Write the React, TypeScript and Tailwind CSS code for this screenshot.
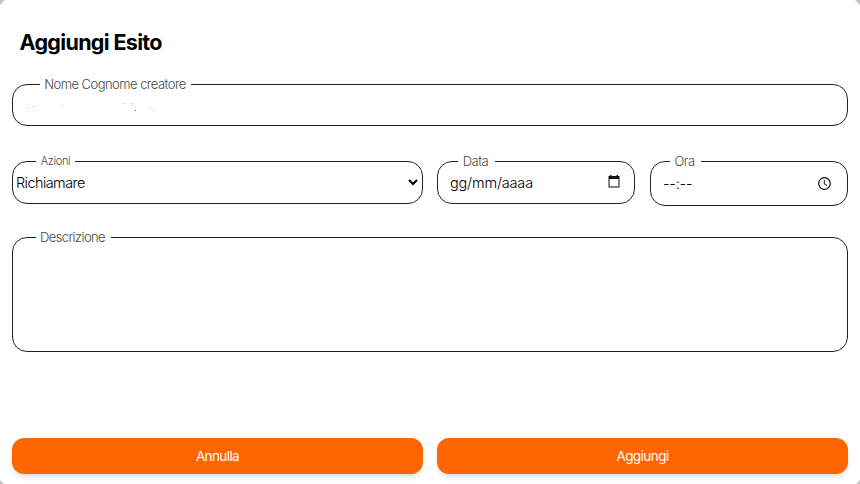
import type { ReactNode } from "react";

function Field({ label, labelClass, className, children }: { label: string; labelClass: string; className: string; children?: ReactNode }) {
  return (
    <div className={`relative flex items-center rounded-[15px] border border-[#212121] ${className}`}>
      <span className={`absolute flex h-4 items-center justify-center whitespace-nowrap bg-white font-light text-[#484848] ${labelClass}`}>{label}</span>
      {children}
    </div>
  );
}

export default function App() {
  return (
    <div className="h-[484px] w-[860px] overflow-hidden bg-[#c4c4c4] font-[Inter,sans-serif]">
      <div className="-mx-[2px] -mt-[2px] flex h-[489px] flex-col rounded-[15px] bg-white px-[14px] pt-[2px]">
        <h1 className="ml-[7.5px] mt-[26px] h-8 text-[21.5px] font-bold leading-8 tracking-[-0.66px] text-black">Aggiungi Esito</h1>
        <Field label="Nome Cognome creatore" labelClass="left-[27px] -top-[8px] w-[151px] pr-px text-[13px] tracking-[-0.54px]" className="mt-[26px] h-[42px]">
          <svg className="ml-3 mt-1" width="132" height="10" fill="#dadada">
            <path d="M0 2h1v1h-1zM1 5h1v1h-1zM3 6h1v1h-1zM8 4h3v1h-3zM36 3h2v1h-2zM97 1h3v1h-3zM106 1h3v1h-3zM123 5h3v1h-3zM128 8h2v1h-2z" />
            <path d="M110 8h1v1h-1z" fill="#555" />
          </svg>
        </Field>
        <div className="mt-[35px] flex items-start">
          <Field label="Azioni" labelClass="left-[23px] -top-[9px] w-[39px] text-[11px] tracking-[-0.3px]" className="h-[43px] w-[411px] justify-between pl-[3px] pr-1">
            <span className="text-[14.5px] font-light tracking-[-0.58px] text-black">Richiamare</span>
            <svg width="10" height="7" viewBox="0 0 10 7" fill="none" stroke="#000" strokeWidth="2">
              <path d="M1 1l4 4 4-4" />
            </svg>
          </Field>
          <Field label="Data" labelClass="left-[20px] -top-[8px] w-[37px] pr-[2px] text-[13px] tracking-[-0.54px]" className="ml-[14px] h-[43px] w-[198px] justify-between pl-3 pr-[14px]">
            <span className="text-[14.5px] font-light tracking-[-0.18px] text-black">gg/mm/aaaa</span>
            <svg className="-mt-[2px]" width="12" height="13" viewBox="0 0 12 13" fill="#111">
              <path fillRule="evenodd" d="M2 0h1.5v1h5V0H10v1h1.5v11.5H.5V1H2zM1.5 4v7.5h9V4z" />
            </svg>
          </Field>
          <Field label="Ora" labelClass="left-[19px] -top-[8px] w-[31px] pr-[2px] text-[13px] tracking-[-0.54px]" className="ml-[15px] h-[45px] w-[198px] justify-between pl-3 pr-4">
            <span className="text-[14.5px] font-light tracking-[-0.2px] text-black">--:--</span>
            <svg width="13" height="13" viewBox="0 0 13 13" fill="none" stroke="#111" strokeWidth="1.2">
              <circle cx="6.5" cy="6.5" r="5.8" />
              <path d="M6.3 3v3.9l2.7 1.7" strokeWidth="1" />
            </svg>
          </Field>
        </div>
        <Field label="Descrizione" labelClass="left-[23px] -top-[8px] w-[75px] pr-[2px] text-[13px] tracking-[-0.6px]" className="mt-[31px] h-[115px]" />
        <div className="mt-[86px] flex gap-[14px]">
          <button className="h-9 flex-1 rounded-[12px] bg-[#ff6500] text-[13.5px] tracking-[-0.6px] text-white shadow-md">Annulla</button>
          <button className="h-9 flex-1 rounded-[12px] bg-[#ff6500] text-[13.5px] tracking-[-0.55px] text-white shadow-md">Aggiungi</button>
        </div>
      </div>
    </div>
  );
}
